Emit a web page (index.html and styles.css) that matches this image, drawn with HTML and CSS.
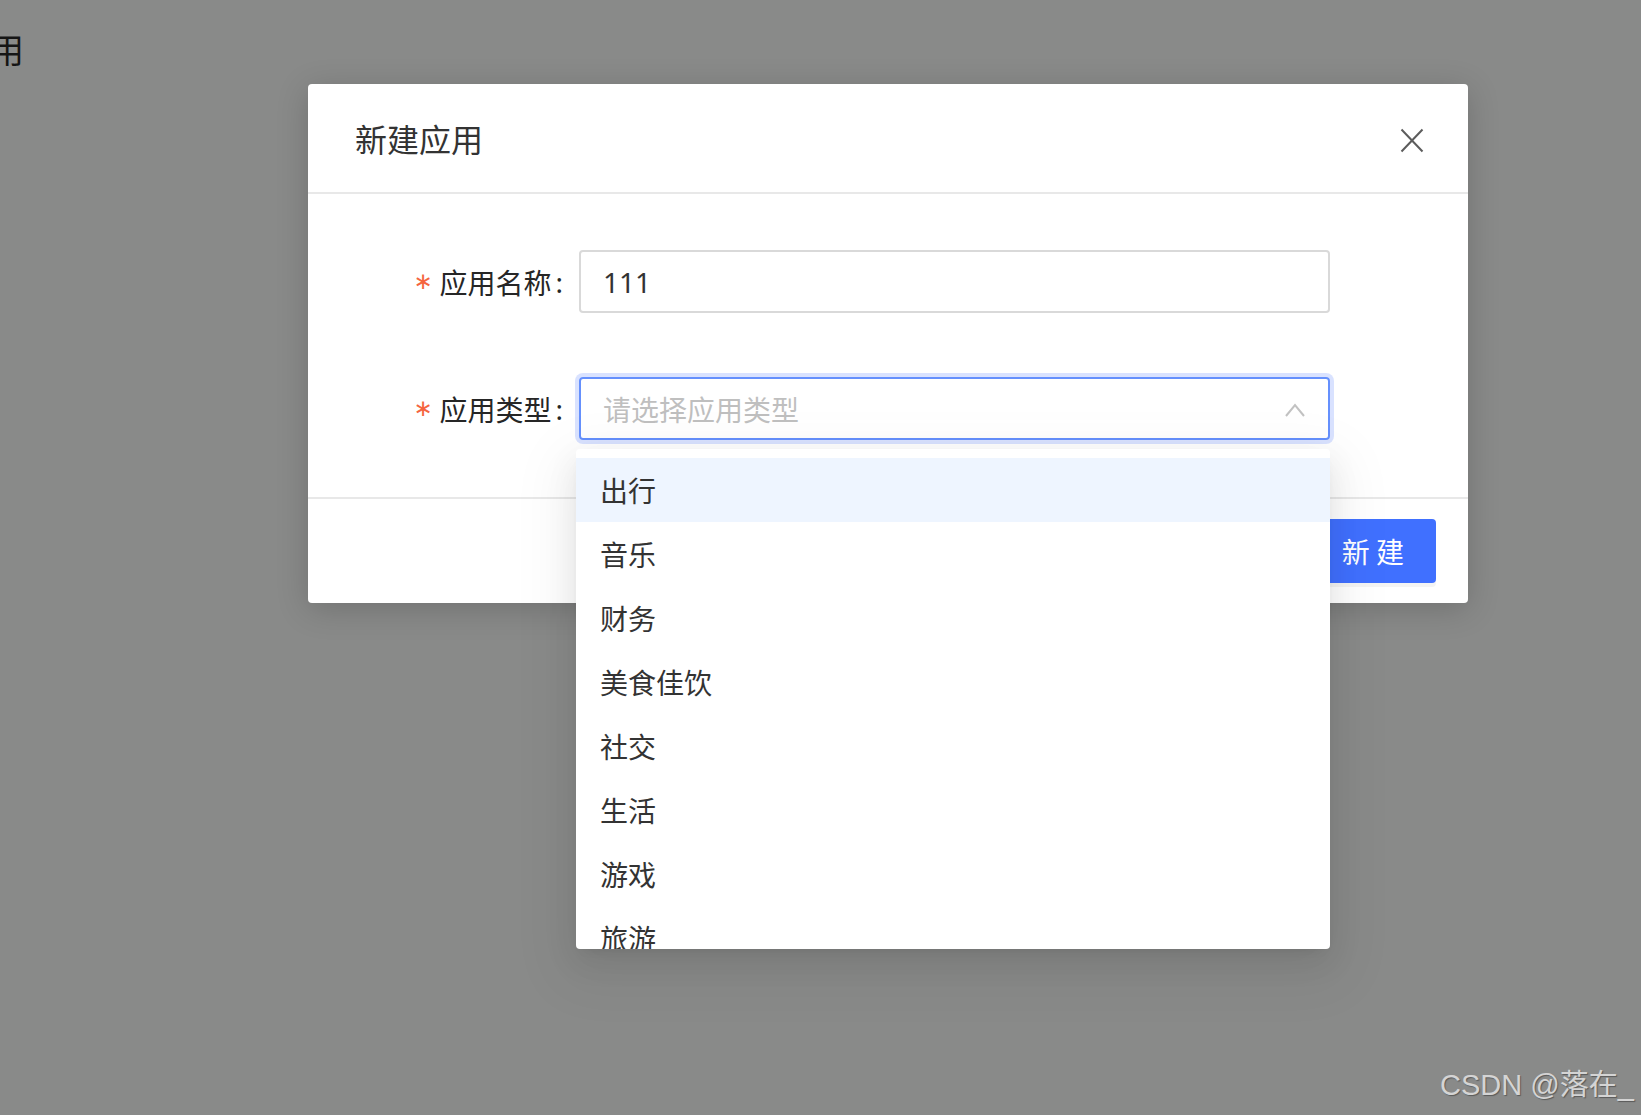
FILE: index.html
```html
<!DOCTYPE html>
<html lang="zh-CN">
<head>
<meta charset="utf-8">
<title>新建应用</title>
<link rel="stylesheet" href="styles.css">
</head>
<body>
<div class="page-title">应用</div>

<div class="modal">
  <div class="modal-header">
    <div class="modal-title">新建应用</div>
    <svg class="close-icon" width="24" height="25" viewBox="0 0 24 25"><path d="M1.5 1.5 L22.5 23.5 M22.5 1.5 L1.5 23.5" stroke="#5c5c5c" stroke-width="2" fill="none"/></svg>
  </div>
  <div class="modal-body">
    <div class="form-row">
      <div class="form-label"><span class="req">∗</span><span class="label-text">应用名称</span><span class="colon">:</span></div>
      <div class="input">111</div>
    </div>
    <div class="form-row">
      <div class="form-label"><span class="req">∗</span><span class="label-text">应用类型</span><span class="colon">:</span></div>
      <div class="select">
        <span class="placeholder">请选择应用类型</span>
        <svg class="chevron" width="20" height="14" viewBox="0 0 20 14"><polyline points="1,13 10,2 19,13" stroke="#c2c2c2" stroke-width="2" fill="none"/></svg>
      </div>
    </div>
  </div>
  <div class="modal-footer">
    <button class="btn">取 消</button>
    <button class="btn btn-primary">新 建</button>
  </div>
</div>

<div class="dropdown">
  <div class="option active">出行</div>
  <div class="option">音乐</div>
  <div class="option">财务</div>
  <div class="option">美食佳饮</div>
  <div class="option">社交</div>
  <div class="option">生活</div>
  <div class="option">游戏</div>
  <div class="option">旅游</div>
</div>

<div class="watermark">CSDN @落在_</div>
</body>
</html>
```
FILE: styles.css
```css
* { box-sizing: border-box; }
html, body { margin: 0; padding: 0; }
body {
  width: 1641px;
  height: 1115px;
  overflow: hidden;
  position: relative;
  background: #898a89;
  font-family: "Noto Sans", "Noto Sans CJK SC", sans-serif;
}
.page-title {
  margin-left: -44px;
  padding-top: 32px;
  font-family: "Noto Sans CJK SC", sans-serif;
  font-size: 34px;
  line-height: 1;
  color: #151515;
  white-space: nowrap;
}
.modal {
  position: absolute;
  left: 308px;
  top: 84px;
  width: 1160px;
  background: #fff;
  border-radius: 4px;
  box-shadow: 0 6px 32px rgba(0, 0, 0, 0.18);
}
.modal-header {
  height: 110px;
  padding: 0 44px 0 47px;
  display: flex;
  align-items: center;
  justify-content: space-between;
  border-bottom: 2px solid #e8e8e8;
}
.modal-title {
  font-family: "Noto Sans CJK SC", sans-serif;
  font-size: 32px;
  color: #333;
}
.close-icon { display: block; margin-top: 4px; }
.modal-body {
  padding: 56px 138px 57px 0;
  display: flex;
  flex-direction: column;
  gap: 64px;
}
.form-row {
  display: flex;
  align-items: center;
  height: 63px;
}
.form-label {
  width: 271px;
  flex: none;
  display: flex;
  align-items: center;
  justify-content: flex-end;
  padding-right: 16px;
  font-size: 28px;
  color: #262626;
}
.req {
  color: #f5653f;
  font-family: "DejaVu Sans", sans-serif;
  font-size: 23px;
  margin-right: 7px;
  line-height: 1;
}
.colon { margin-left: 4px; }
.input, .select {
  flex: 1;
  height: 63px;
  border-radius: 4px;
  font-size: 28px;
  display: flex;
  align-items: center;
}
.input {
  border: 2px solid #d9d9d9;
  padding: 0 22px;
  color: #333;
}
.select {
  border: 2px solid #6590fd;
  box-shadow: 0 0 0 4px rgba(64, 112, 255, 0.2);
  padding: 0 23px 0 22px;
  justify-content: space-between;
}
.placeholder { color: #bfbfbf; }
.chevron { display: block; margin-top: 2px; }
.modal-footer {
  border-top: 2px solid #e8e8e8;
  padding: 20px 32px 20px;
  display: flex;
  justify-content: flex-end;
  gap: 16px;
}
.btn {
  height: 64px;
  padding: 0 30px;
  font-family: "Noto Sans CJK SC", sans-serif;
  font-size: 28px;
  border-radius: 4px;
  border: 2px solid #d9d9d9;
  background: #fff;
  color: #333;
  box-shadow: 0 4px 0 rgba(0, 0, 0, 0.045);
}
.btn-primary {
  background: #4070ff;
  border-color: #4070ff;
  color: #fff;
}
.dropdown {
  position: absolute;
  left: 576px;
  top: 449px;
  width: 754px;
  height: 500px;
  overflow: hidden;
  background: #fff;
  border-radius: 4px;
  padding-top: 9px;
  box-shadow: 0 6px 12px -8px rgba(0, 0, 0, 0.12), 0 12px 32px 0 rgba(0, 0, 0, 0.08), 0 18px 56px 16px rgba(0, 0, 0, 0.05);
}
.option {
  height: 64px;
  padding-left: 24px;
  display: flex;
  align-items: center;
  font-size: 28px;
  color: #333;
}
.option.active { background: #eef5ff; }
.watermark {
  position: absolute;
  left: 1440px;
  top: 1071px;
  font-family: "Liberation Sans", "Noto Sans CJK SC", sans-serif;
  font-size: 29px;
  line-height: 29px;
  color: #d4d4d4;
  text-shadow: 1px 1px 1px rgba(0, 0, 0, 0.35);
  white-space: nowrap;
}
```
